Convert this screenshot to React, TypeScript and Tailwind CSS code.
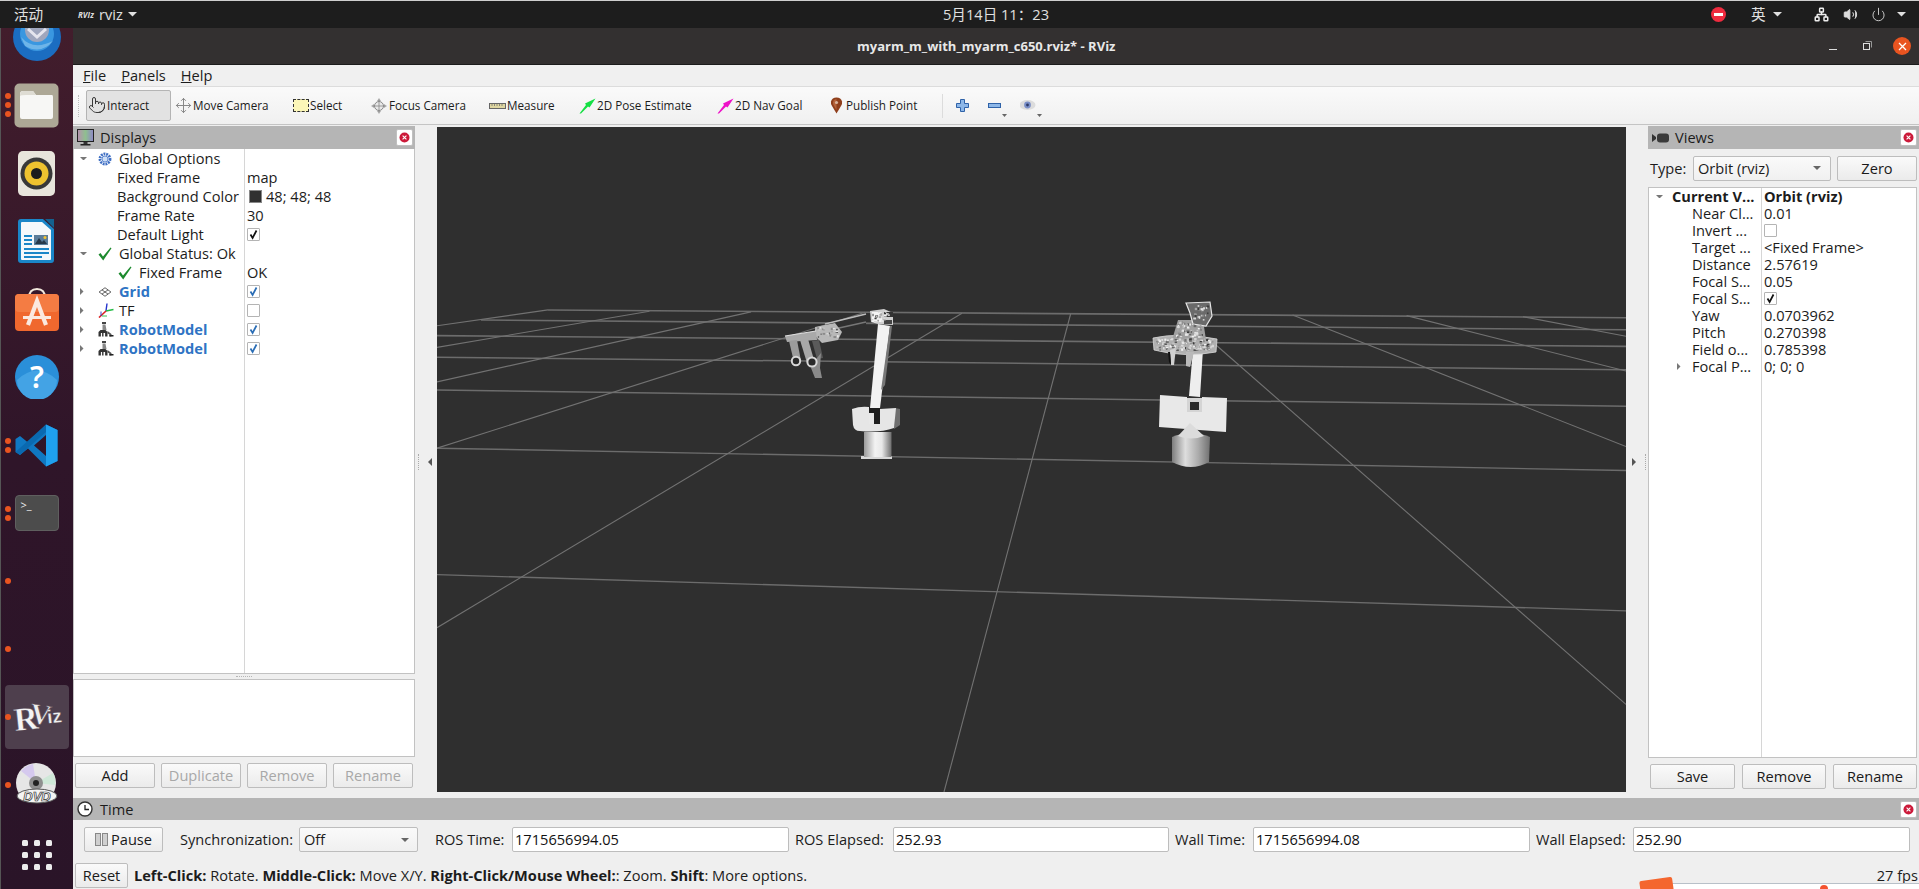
import React from "react";
import { Pointer, Move, Volume2, Power, Network } from "lucide-react";

const Tri = ({ dir = "down", c = "#666", s = 4 }: { dir?: "down" | "right" | "left"; c?: string; s?: number }) => {
  const pts =
    dir === "down" ? `0,0 ${s * 2},0 ${s},${s}` : dir === "right" ? `0,0 ${s},${s} 0,${s * 2}` : `${s},0 0,${s} ${s},${s * 2}`;
  const w = dir === "down" ? s * 2 : s;
  const h = dir === "down" ? s : s * 2;
  return (
    <svg width={w} height={h} viewBox={`0 0 ${w} ${h}`} className="shrink-0">
      <polygon points={pts} fill={c} />
    </svg>
  );
};

const Check = ({ on, blue }: { on?: boolean; blue?: boolean }) => (
  <div className="w-[13px] h-[13px] border border-[#b4b4b4] bg-white rounded-[1px] flex items-center justify-center">
    {on && (
      <svg width="11" height="11" viewBox="0 0 11 11">
        <path d="M2.5 5.5 L4.6 9 L8.5 1.5" fill="none" stroke={blue ? "#2a6db5" : "#111"} strokeWidth="1.7" />
      </svg>
    )}
  </div>
);

const GreenCheck = () => (
  <svg width="14" height="14" viewBox="0 0 14 14" className="shrink-0">
    <path d="M0.5 7.5 L2.5 6 L5 9.5 L12.5 0.5 L13.5 1.2 L5.2 13.5 Z" fill="#1d8a2e" />
  </svg>
);

const Gear = () => (
  <svg width="14" height="14" viewBox="0 0 15 15" className="shrink-0">
    <circle cx="7.5" cy="7.5" r="5.4" fill="none" stroke="#3f6fc4" strokeWidth="3" strokeDasharray="2 0.9" />
    <circle cx="7.5" cy="7.5" r="3.2" fill="#cfe0f7" stroke="#3f6fc4" strokeWidth="0.8" />
  </svg>
);

const GridIcon = () => (
  <svg width="14" height="10" viewBox="0 0 15 11" className="shrink-0">
    <path d="M7.5 0.8 L14 5.5 L7.5 10.2 L1 5.5 Z M4.2 3.2 L10.8 7.8 M10.8 3.2 L4.2 7.8" fill="none" stroke="#444" strokeWidth="0.9" />
  </svg>
);

const TFIcon = () => (
  <svg width="16" height="15" viewBox="0 0 16 15" className="shrink-0">
    <path d="M8 8 L9 0.5" stroke="#2233cc" strokeWidth="1.4" />
    <path d="M8 8 L15.5 6.5" stroke="#22bb44" strokeWidth="1.4" />
    <path d="M8 8 L1 14.5" stroke="#dd2222" strokeWidth="1.6" />
    <path d="M3 8.5 L3 13" stroke="#2233cc" strokeWidth="0.9" />
    <path d="M4 13 L9 13" stroke="#22bb44" strokeWidth="0.9" />
  </svg>
);

const RobotIcon = () => (
  <svg width="16" height="15" viewBox="0 0 16 15" className="shrink-0">
    <rect x="4" y="0" width="4" height="2" fill="#444" />
    <path d="M4.5 2.5 h3 l1 5.5 h-4 Z" fill="#888" />
    <path d="M0.5 14.5 v-4.5 l2-2 h5 l2 2 v4.5 h-2.4 v-3.5 h-1.6 v3.5 h-1.4 v-3.5 h-1.2 v3.5 Z" fill="#333" />
    <path d="M9.5 9 l4 3 v2.5 h-2.2 v-2 l-1.8-1 Z" fill="#555" />
    <rect x="11.5" y="13" width="4" height="1.5" fill="#222" />
  </svg>
);

const CloseBtn = () => (
  <div className="w-[17px] h-[17px] bg-white border border-[#c0c0c0] rounded-[2px] flex items-center justify-center">
    <svg width="11" height="11" viewBox="0 0 11 11">
      <circle cx="5.5" cy="5.5" r="5" fill="#cc1a3a" />
      <path d="M3.6 3.6 L7.4 7.4 M7.4 3.6 L3.6 7.4" stroke="#fff" strokeWidth="1.1" />
    </svg>
  </div>
);

const Btn = ({ children, w, disabled }: { children: React.ReactNode; w: string; disabled?: boolean }) => (
  <div
    className={`${w} h-[25px] shrink-0 flex items-center justify-center rounded-[2px] border border-[#bdbdbd] bg-gradient-to-b from-[#fafafa] to-[#ebebeb] ${disabled ? "text-[#a8a8a8]" : "text-[#1a1a1a]"}`}
  >
    {children}
  </div>
);

const TreeRow = ({
  arrow,
  icon,
  label,
  value,
  labelClass = "",
  indent = 0,
}: {
  arrow?: "down" | "right";
  icon?: React.ReactNode;
  label: string;
  value?: React.ReactNode;
  labelClass?: string;
  indent?: number;
}) => (
  <div className="h-[19px] flex items-center">
    <div className="w-[171px] h-full shrink-0 flex items-center border-r border-[#d6d6d6]">
      <div className="w-[24px] pl-[6px] shrink-0 flex items-center">
        {arrow && <Tri dir={arrow} c="#777" s={3.5} />}
      </div>
      {icon ? (
        <>
          <div className="w-[20px] shrink-0 flex items-center justify-start" style={{ marginLeft: indent }}>
            {icon}
          </div>
          <span className={`ml-[1px] whitespace-nowrap ${labelClass}`}>{label}</span>
        </>
      ) : (
        <span className={`ml-[19px] whitespace-nowrap ${labelClass}`}>{label}</span>
      )}
    </div>
    <div className="pl-[2px] flex items-center gap-[4px] whitespace-nowrap">{value}</div>
  </div>
);

const ViewRow = ({
  label,
  value,
  bold,
  arrow,
}: {
  label: string;
  value: React.ReactNode;
  bold?: boolean;
  arrow?: "down" | "right";
}) => (
  <div className="h-[17px] flex items-center">
    <div className="w-[113px] h-full shrink-0 flex items-center border-r border-[#d6d6d6]">
      {bold ? (
        <>
          <div className="w-[23px] pl-[7px] shrink-0 flex">
            <Tri dir="down" c="#777" s={3.5} />
          </div>
          <span className="font-bold whitespace-nowrap">{label}</span>
        </>
      ) : (
        <>
          <div className="w-[43px] pl-[28px] shrink-0 flex">{arrow && <Tri dir="right" c="#777" s={3.5} />}</div>
          <span className="whitespace-nowrap">{label}</span>
        </>
      )}
    </div>
    <div className={`pl-[2px] whitespace-nowrap ${bold ? "font-bold" : ""}`}>{value}</div>
  </div>
);

const ToolBtn = ({ w, icon, label, active }: { w: string; icon: React.ReactNode; label: string; active?: boolean }) => (
  <div
    className={`${w} h-[31px] shrink-0 flex items-center rounded-[2px] ${active ? "bg-[#e2e2e2] border border-[#b4b4b4]" : ""}`}
  >
    {icon}
    <span className="ml-[1px] whitespace-nowrap">{label}</span>
  </div>
);

const Field = ({ w, value }: { w: string; value: string }) => (
  <div className={`${w} h-[25px] shrink-0 bg-white border border-[#bdbdbd] rounded-[2px] flex items-center pl-[2px] text-[#111]`}>
    {value}
  </div>
);

const Dots = ({ n }: { n: number }) => (
  <div className="absolute left-[5px] top-0 bottom-0 flex flex-col justify-center gap-[3px]">
    {Array.from({ length: n }).map((_, i) => (
      <div key={i} className="w-[6px] h-[6px] rounded-full bg-[#e95420]" />
    ))}
  </div>
);

const Slot = ({ dots = 0, children, active }: { dots?: number; children?: React.ReactNode; active?: boolean }) => (
  <div className="relative h-[68px] w-[73px] shrink-0 flex items-center justify-center">
    {active && <div className="absolute left-[5px] top-[2px] w-[64px] h-[64px] rounded-[4px] bg-[#4e3f4d]" />}
    <div className="relative flex items-center justify-center">{children}</div>
    {dots > 0 && <Dots n={dots} />}
  </div>
);

const Dock = () => (
  <div className="w-[73px] shrink-0 h-full overflow-hidden flex flex-col bg-gradient-to-b from-[#421d2c] via-[#2f1529] to-[#2a1428] border-l border-[#555]">
    <div className="-mt-[25px] flex flex-col -ml-[1px]">
      <Slot>
        <svg width="48" height="48" viewBox="0 0 48 48">
          <circle cx="24" cy="24" r="24" fill="#1b6dc1" />
          <circle cx="24" cy="21" r="17" fill="#3a97e0" />
          <circle cx="24" cy="17" r="12" fill="#9fa6bd" />
          <path d="M15 16 L24 24 L33 16" fill="none" stroke="#e5e5ee" strokeWidth="3" />
          <path d="M8 24 Q20 38 40 28 Q28 42 12 33 Z" fill="#bfe3f8" opacity="0.4" />
        </svg>
      </Slot>
      <Slot dots={3}>
        <svg width="45" height="45" viewBox="0 0 45 45">
          <rect x="0.5" y="0.5" width="44" height="44" rx="5" fill="#ada896" />
          <path d="M6 11 Q6 8 9 8 H19 L22 12 H38 Q39 12 39 14 V34 Q39 36 37 36 H8 Q6 36 6 34 Z" fill="#f7f7f5" />
          <path d="M6 13 Q6 8 9 8 H19 L22 12 H12 Q7 12 6 13 Z" fill="#dedcd3" />
        </svg>
      </Slot>
      <Slot>
        <svg width="37" height="45" viewBox="0 0 37 45">
          <rect x="0" y="0" width="37" height="45" rx="5" fill="#e8e5dc" />
          <circle cx="18.5" cy="22.5" r="16" fill="#383838" />
          <circle cx="18.5" cy="22.5" r="12" fill="#eec22f" />
          <circle cx="18.5" cy="22.5" r="5.5" fill="#1d1d1d" />
        </svg>
      </Slot>
      <Slot>
        <svg width="38" height="45" viewBox="0 0 38 45">
          <path d="M3 0 H25 L36 10 V41 Q36 44 33 44 H3 Q0 44 0 41 V3 Q0 0 3 0 Z" fill="#1a86c8" />
          <path d="M4 3 H24 L33 11 V40 Q33 41 32 41 H4 Q3 41 3 40 V4 Q3 3 4 3 Z" fill="#f4f8fb" />
          <path d="M27 0 H36 V9 Z" fill="#14618f" />
          <rect x="6" y="16" width="8" height="2" fill="#1a86c8" />
          <rect x="6" y="20" width="8" height="2" fill="#1a86c8" />
          <rect x="6" y="24" width="8" height="2" fill="#1a86c8" />
          <rect x="16" y="16" width="14" height="10" fill="#5a7d9a" />
          <path d="M17 25 L21 19 L24 23 L26 21 L29 25 Z" fill="#26394a" />
          <circle cx="27" cy="18.5" r="1.5" fill="#f4c430" />
          <rect x="6" y="29" width="25" height="2" fill="#1a86c8" />
          <rect x="6" y="33" width="25" height="2" fill="#1a86c8" />
          <rect x="6" y="37" width="18" height="2" fill="#1a86c8" />
        </svg>
      </Slot>
      <Slot>
        <svg width="44" height="43" viewBox="0 0 44 43">
          <path d="M14 10 Q14 1 22 1 Q30 1 30 10" fill="none" stroke="#f0e8dc" strokeWidth="2" />
          <rect x="0" y="6" width="44" height="37" rx="4" fill="#f0682e" />
          <rect x="0" y="6" width="44" height="18" rx="4" fill="#f47c43" />
          <path d="M13 37 L22 13 L31 37" fill="none" stroke="#fbe9df" strokeWidth="4.2" />
          <rect x="8" y="28" width="28" height="3" fill="#fbe9df" />
        </svg>
      </Slot>
      <Slot>
        <svg width="44" height="44" viewBox="0 0 44 44">
          <circle cx="22" cy="22" r="22" fill="#2a8fd9" />
          <path d="M2 25 Q22 6 42 25 A20 20 0 0 1 2 25" fill="#43a3e5" />
          <text x="22" y="33" textAnchor="middle" fontSize="30" fontWeight="600" fill="#fff" fontFamily="Noto Sans, sans-serif">?</text>
        </svg>
      </Slot>
      <Slot dots={2}>
        <svg width="43" height="43" viewBox="0 0 43 43">
          <path d="M31 0.5 L42.5 6 V37 L31 42.5 L13 24.5 L5 31 L0.5 28 V15 L5 12 L13 18.5 Z M31 11 L19 21.5 L31 32 Z" fill="#1078c2" />
          <path d="M31 0.5 L42.5 6 V37 L31 42.5 Z" fill="#1fa0ee" />
          <path d="M0.5 28 L31 0.5 L31 8 L5 31 Z" fill="#0a69b0" />
        </svg>
      </Slot>
      <Slot dots={2}>
        <div className="w-[44px] h-[36px] rounded-[4px] bg-[#4c4c4c] border border-[#5f5f5f] flex items-start pl-[5px] pt-[2px] text-[#eee] text-[11px] leading-[14px]">
          &gt;_
        </div>
      </Slot>
      <Slot dots={1} />
      <Slot dots={1} />
      <Slot dots={1} active>
        <svg width="60" height="60" viewBox="-7 -12 60 60">
          <text x="0" y="31" fontSize="33" fontWeight="700" fill="#f4f4f4" stroke="#4e3f4d" strokeWidth="0.4" fontFamily="Liberation Serif, serif" transform="rotate(-6 10 20)">R</text>
          <text x="16" y="25" fontSize="29" fontWeight="700" fill="#eeeeee" stroke="#4e3f4d" strokeWidth="0.6" fontFamily="Liberation Serif, serif" transform="rotate(8 26 18)">V</text>
          <text x="33" y="24" fontSize="19" fontWeight="700" fill="#f0f0f0" stroke="#4e3f4d" strokeWidth="0.3" fontFamily="Liberation Sans, sans-serif" transform="rotate(-6 38 18)">iz</text>
        </svg>
      </Slot>
      <Slot dots={1}>
        <svg width="44" height="44" viewBox="0 0 44 44">
          <circle cx="21" cy="20" r="20" fill="#e6e6e6" />
          <path d="M21 20 L6 8 A20 20 0 0 1 18 1 Z" fill="#d5c9ee" />
          <path d="M21 20 L38 10 A20 20 0 0 1 40 22 Z" fill="#cfe8d8" />
          <circle cx="21" cy="20" r="7" fill="#8f8f8f" />
          <circle cx="21" cy="20" r="3" fill="#222" />
          <ellipse cx="22" cy="33" rx="20" ry="7" fill="#f4f4f4" stroke="#555" strokeWidth="1" />
          <text x="22" y="37.5" textAnchor="middle" fontSize="13" fontWeight="700" fontStyle="italic" fill="#f8f8f8" stroke="#333" strokeWidth="0.7" fontFamily="Liberation Sans, sans-serif">DVD</text>
        </svg>
      </Slot>
      <div className="mt-[2px] grid grid-cols-3 gap-[6px] w-[30px] ml-[22px] pt-[19px]">
        {Array.from({ length: 9 }).map((_, i) => (
          <div key={i} className="w-[6px] h-[6px] rounded-[1.5px] bg-[#ececec]" />
        ))}
      </div>
    </div>
  </div>
);

const TopBar = () => (
  <div className="h-[28px] shrink-0 bg-[#1d1d1d] border-t border-[#cfcfcf] flex items-center text-[#e0e0e0] text-[14.6px]">
    <span className="ml-[14px] w-[28px] whitespace-nowrap">活动</span>
    <span className="ml-[36px] w-[15px] text-[8px] font-bold italic text-[#ddd] whitespace-nowrap">RVIz</span>
    <span className="ml-[6px] w-[26px]">rviz</span>
    <div className="ml-[3px]">
      <Tri c="#e0e0e0" s={4.5} />
    </div>
    <div className="w-[806px] shrink-0" />
    <span className="w-[108px] whitespace-nowrap">5月14日 11：23</span>
    <div className="w-[660px] shrink-0" />
    <svg width="15" height="15" viewBox="0 0 15 15" className="shrink-0">
      <circle cx="7.5" cy="7.5" r="7.5" fill="#ef2b3f" />
      <rect x="3" y="6" width="9" height="3" fill="#fff" />
    </svg>
    <span className="ml-[25px] w-[15px]">英</span>
    <div className="ml-[7px]">
      <Tri c="#e0e0e0" s={4.5} />
    </div>
    <div className="ml-[32px]">
      <Network size={15} color="#eee" strokeWidth={2.4} />
    </div>
    <div className="ml-[14px]">
      <Volume2 size={15} color="#ddd" fill="#ddd" strokeWidth={1.6} />
    </div>
    <div className="ml-[13px]">
      <Power size={15} color="#ddd" strokeWidth={1.4} />
    </div>
    <div className="ml-[11px]">
      <Tri c="#e0e0e0" s={4.5} />
    </div>
  </div>
);

const TitleBar = () => (
  <div className="h-[37px] shrink-0 bg-[#333030] border-b border-[#1c1c1c] flex items-center">
    <div className="w-[784px] shrink-0" />
    <span className="w-[205px] whitespace-nowrap text-[13px] font-bold text-[#e8e8e8]">myarm_m_with_myarm_c650.rviz* - RViz</span>
    <div className="w-[767px] shrink-0" />
    <div className="w-[8px] h-[1px] bg-[#ddd] mt-[6px]" />
    <svg width="9" height="9" viewBox="0 0 9 9" className="ml-[26px] shrink-0 -mt-[1px]">
      <rect x="0.5" y="2.5" width="6" height="6" fill="none" stroke="#ddd" />
      <path d="M2.5 0.5 H8.5 V6.5" fill="none" stroke="#999" />
    </svg>
    <div className="ml-[21px] w-[18px] h-[18px] rounded-full bg-[#e95420] flex items-center justify-center">
      <svg width="9" height="9" viewBox="0 0 9 9">
        <path d="M1 1 L8 8 M8 1 L1 8" stroke="#fff" strokeWidth="1.3" />
      </svg>
    </div>
  </div>
);

const MenuBar = () => (
  <div className="h-[22px] shrink-0 bg-[#f0f0f0] border-b border-[#dcdcdc] flex items-center text-[14.6px] text-[#1c1c1c] pl-[10px] gap-[15px]">
    <span><span className="underline">F</span>ile</span>
    <span><span className="underline">P</span>anels</span>
    <span><span className="underline">H</span>elp</span>
  </div>
);

const ToolBar = () => (
  <div className="h-[38px] shrink-0 bg-gradient-to-b from-[#fafafa] to-[#f0f0f0] border-b border-[#c4c4c4] flex items-center text-[11.7px] text-[#1c1c1c]">
    <div className="ml-[5px] w-[4px] h-[22px] border-l border-dotted border-[#bbb]" />
    <div className="ml-[4px]">
      <ToolBtn
        w="w-[85px]"
        active
        icon={
          <div className="ml-[1px] -mt-[2px]">
            <Pointer size={18} color="#333" strokeWidth={1.3} />
          </div>
        }
        label="Interact"
      />
    </div>
    <div className="ml-[4px]">
      <ToolBtn
        w="w-[118px]"
        icon={<Move size={17} color="#888" strokeWidth={1.4} />}
        label="Move Camera"
      />
    </div>
    <ToolBtn
      w="w-[77px]"
      icon={<div className="w-[16px] h-[13px] bg-[#fbf6b8] border border-dashed border-[#333]" />}
      label="Select"
    />
    <ToolBtn
      w="w-[119px]"
      icon={
        <svg width="18" height="18" viewBox="0 0 18 18">
          <path d="M9 1 L11 4 H7 Z M9 17 L7 14 H11 Z M1 9 L4 7 V11 Z M17 9 L14 11 V7 Z" fill="#aaa" />
          <circle cx="9" cy="9" r="4.5" fill="#e8e8e8" stroke="#888" />
          <path d="M9 3 V15 M3 9 H15" stroke="#888" strokeWidth="0.8" />
        </svg>
      }
      label="Focus Camera"
    />
    <ToolBtn
      w="w-[90px]"
      icon={
        <svg width="17" height="6" viewBox="0 0 17 6">
          <rect x="0.5" y="0.5" width="16" height="5" fill="#dfd7a2" stroke="#666" />
          <path d="M3 1 V3 M5.5 1 V3 M8 1 V3 M10.5 1 V3 M13 1 V3" stroke="#666" strokeWidth="0.7" />
        </svg>
      }
      label="Measure"
    />
    <ToolBtn
      w="w-[138px]"
      icon={
        <svg width="17" height="16" viewBox="0 0 17 16">
          <path d="M0.5 15.5 L7 7 L6 5.5 L16.5 0.5 L10.5 9.5 L9 8.5 L2 15.5 Z" fill="#16e044" />
        </svg>
      }
      label="2D Pose Estimate"
    />
    <ToolBtn
      w="w-[112px]"
      icon={
        <svg width="17" height="16" viewBox="0 0 17 16">
          <path d="M0.5 15.5 L7 7 L6 5.5 L16.5 0.5 L10.5 9.5 L9 8.5 L2 15.5 Z" fill="#ee12c8" />
        </svg>
      }
      label="2D Nav Goal"
    />
    <ToolBtn
      w="w-[113px]"
      icon={
        <svg width="15" height="17" viewBox="0 0 15 17" className="mr-[1px]">
          <path d="M7.5 16.5 L3 9 Q1.5 6.5 2 4.5 Q3 0.5 7.5 0.5 Q12 0.5 13 4.5 Q13.5 6.5 12 9 Z" fill="#8f3f1c" />
          <path d="M7.5 13 L4.5 8 Q3.5 5.5 4.5 3.5 Q5.5 2 7.5 2 Z" fill="#b4623a" />
          <circle cx="7.5" cy="5.5" r="1.6" fill="#d8b39c" />
        </svg>
      }
      label="Publish Point"
    />
    <div className="w-[1px] h-[24px] bg-[#dcdcdc]" />
    <svg width="13" height="13" viewBox="0 0 13 13" className="ml-[13px] shrink-0">
      <path d="M4.5 0.5 H8.5 V4.5 H12.5 V8.5 H8.5 V12.5 H4.5 V8.5 H0.5 V4.5 H4.5 Z" fill="#8db7e8" stroke="#2f62a8" />
    </svg>
    <svg width="19" height="20" viewBox="0 0 19 20" className="ml-[19px] shrink-0 mt-[5px]">
      <rect x="0.5" y="5.5" width="12" height="4" fill="#8db7e8" stroke="#2f62a8" />
      <path d="M14 16 h5 l-2.5 3 Z" fill="#666" />
    </svg>
    <svg width="22" height="20" viewBox="0 0 22 20" className="ml-[13px] shrink-0 mt-[5px]">
      <ellipse cx="7.5" cy="7" rx="8" ry="5" fill="#dcdcdc" />
      <circle cx="7.5" cy="7" r="3.4" fill="#7a8fc8" />
      <circle cx="7.5" cy="7" r="1.4" fill="#2d3a66" />
      <path d="M17 16 h5 l-2.5 3 Z" fill="#666" />
    </svg>
  </div>
);

const PanelTitle = ({ icon, title }: { icon: React.ReactNode; title: string }) => (
  <div className="h-[23px] shrink-0 bg-[#b5b5b5] flex items-center pr-[2px]">
    <div className="w-[26px] pl-[4px] shrink-0 flex items-center">{icon}</div>
    <span className="ml-[1px]">{title}</span>
    <div className="ml-auto">
      <CloseBtn />
    </div>
  </div>
);

const Displays = () => (
  <div className="w-[342px] shrink-0 h-full flex flex-col">
    <PanelTitle
      title="Displays"
      icon={
        <svg width="17" height="17" viewBox="0 0 17 17">
          <defs>
            <linearGradient id="scr" x1="0" x2="1" y1="0" y2="0">
              <stop offset="0" stopColor="#b78fb0" />
              <stop offset="0.5" stopColor="#8fbf8f" />
              <stop offset="1" stopColor="#8f86c9" />
            </linearGradient>
          </defs>
          <rect x="0.5" y="0.5" width="16" height="12" fill="url(#scr)" stroke="#222" />
          <rect x="6.5" y="13" width="4" height="2" fill="#333" />
          <rect x="3.5" y="15" width="10" height="1.5" fill="#222" />
        </svg>
      }
    />
    <div className="h-[525px] shrink-0 bg-white border-x border-b border-[#c2c2c2] flex flex-col">
      <TreeRow arrow="down" icon={<Gear />} label="Global Options" />
      <TreeRow label="Fixed Frame" value="map" />
      <TreeRow
        label="Background Color"
        value={
          <>
            <div className="w-[13px] h-[13px] bg-[#303030] border border-[#888] ml-[2px]" />
            <span>48; 48; 48</span>
          </>
        }
      />
      <TreeRow label="Frame Rate" value="30" />
      <TreeRow label="Default Light" value={<Check on />} />
      <TreeRow arrow="down" icon={<GreenCheck />} label="Global Status: Ok" />
      <TreeRow icon={<GreenCheck />} indent={20} label="Fixed Frame" value="OK" />
      <TreeRow arrow="right" icon={<GridIcon />} label="Grid" labelClass="font-bold text-[#2f74c4]" value={<Check on blue />} />
      <TreeRow arrow="right" icon={<TFIcon />} label="TF" value={<Check />} />
      <TreeRow arrow="right" icon={<RobotIcon />} label="RobotModel" labelClass="font-bold text-[#2f74c4]" value={<Check on blue />} />
      <TreeRow arrow="right" icon={<RobotIcon />} label="RobotModel" labelClass="font-bold text-[#2f74c4]" value={<Check on blue />} />
      <div className="flex-1 flex">
        <div className="w-[171px] border-r border-[#d6d6d6]" />
      </div>
    </div>
    <div className="h-[5px] shrink-0 flex items-center justify-center">
      <div className="w-[16px] border-t border-dotted border-[#b5b5b5]" />
    </div>
    <div className="h-[78px] shrink-0 bg-white border border-[#c2c2c2]" />
    <div className="mt-[6px] pl-[2px] flex gap-[6px]">
      <Btn w="w-[80px]">Add</Btn>
      <Btn w="w-[80px]" disabled>Duplicate</Btn>
      <Btn w="w-[80px]" disabled>Remove</Btn>
      <Btn w="w-[80px]" disabled>Rename</Btn>
    </div>
  </div>
);

const Views = () => (
  <div className="w-[271px] shrink-0 h-full flex flex-col">
    <PanelTitle
      title="Views"
      icon={
        <svg width="17" height="10" viewBox="0 0 17 10">
          <path d="M0 1 L4 4 V6 L0 9 Z" fill="#333" />
          <rect x="5" y="0.5" width="12" height="9" rx="3" fill="#3a3a3a" />
        </svg>
      }
    />
    <div className="h-[38px] shrink-0 flex items-center">
      <span className="ml-[2px] w-[43px]">Type:</span>
      <div className="w-[138px] h-[25px] shrink-0 border border-[#bdbdbd] rounded-[2px] bg-gradient-to-b from-[#fafafa] to-[#f0f0f0] flex items-center pl-[4px] pr-[9px]">
        <span>Orbit (rviz)</span>
        <div className="ml-auto">
          <Tri c="#666" s={4} />
        </div>
      </div>
      <div className="ml-[6px]">
        <Btn w="w-[80px]">Zero</Btn>
      </div>
    </div>
    <div className="h-[571px] shrink-0 w-[269px] bg-white border border-[#c2c2c2] flex flex-col">
      <ViewRow bold label="Current V..." value="Orbit (rviz)" />
      <ViewRow label="Near Cl..." value="0.01" />
      <ViewRow label="Invert ..." value={<Check />} />
      <ViewRow label="Target ..." value="<Fixed Frame>" />
      <ViewRow label="Distance" value="2.57619" />
      <ViewRow label="Focal S..." value="0.05" />
      <ViewRow label="Focal S..." value={<Check on />} />
      <ViewRow label="Yaw" value="0.0703962" />
      <ViewRow label="Pitch" value="0.270398" />
      <ViewRow label="Field o..." value="0.785398" />
      <ViewRow arrow="right" label="Focal P..." value="0; 0; 0" />
      <div className="flex-1 flex">
        <div className="w-[113px] border-r border-[#d6d6d6]" />
      </div>
    </div>
    <div className="mt-[6px] pl-[2px] flex gap-[7px]">
      <Btn w="w-[85px]">Save</Btn>
      <Btn w="w-[84px]">Remove</Btn>
      <Btn w="w-[84px]">Rename</Btn>
    </div>
  </div>
);

const hLines: [number, number, number, number, number][] = [
  [548, 310, 1626, 317.7, 1.6],
  [481, 320, 1626, 329.8, 1.6],
  [437, 335.6, 1626, 346.4, 1.6],
  [437, 357.2, 1626, 369.7, 1.5],
  [437, 390, 1626, 406.2, 1.5],
  [437, 448.2, 1626, 470.5, 1.4],
  [437, 574.6, 1626, 610.8, 1.3],
];
const dLines: [number, number, number, number][] = [
  [437, 325.8, 548, 309.9],
  [437, 347.4, 649.5, 311.2],
  [437, 381.9, 751, 311.9],
  [437, 448.2, 865, 312.3],
  [437, 627.7, 962, 313.3],
  [944, 792, 1070.6, 314],
  [1216, 345, 1626, 704.4],
  [1292.6, 315, 1626, 446.5],
  [1406.6, 315.6, 1626, 371],
  [1523, 316.7, 1626, 336.3],
];

const speckle = (x0: number, y0: number, w: number, h: number, n: number, seed: number) => {
  const cols = ["#f0f0f0", "#d8d8d8", "#6a6a6a", "#c4c4c4", "#8a8a8a", "#e6e6e6", "#a8a8a8", "#3c3c3c"];
  const out: { x: number; y: number; w: number; h: number; c: string }[] = [];
  let s = seed;
  const next = () => {
    s = (s * 1103515245 + 12345) % 2147483648;
    return s / 2147483648;
  };
  for (let i = 0; i < n; i++) {
    const sw = 1 + next() * 2;
    const sh = 1 + next() * 1.5;
    out.push({
      x: x0 + next() * (w - sw),
      y: y0 + next() * (h - sh),
      w: sw,
      h: sh,
      c: cols[Math.floor(next() * cols.length)],
    });
  }
  return out;
};

const headSpecks = [
  ...speckle(1156, 338, 58, 13, 170, 7),
  ...speckle(1176, 321, 27, 17, 70, 23),
  ...speckle(1192, 305, 17, 16, 26, 51),
];
const gripSpecks = [...speckle(817, 327, 22, 12, 30, 11), ...speckle(872, 311, 20, 12, 22, 31)];

const Scene = () => (
  <svg className="w-full h-full block" viewBox="437 127 1189 665">
    <defs>
      <linearGradient id="cylL" x1="0" x2="1" y1="0" y2="0">
        <stop offset="0" stopColor="#9a9a9a" />
        <stop offset="0.4" stopColor="#f2f2f2" />
        <stop offset="0.65" stopColor="#e8e8e8" />
        <stop offset="1" stopColor="#6e6e6e" />
      </linearGradient>
      <linearGradient id="cylR" x1="0" x2="1" y1="0" y2="0">
        <stop offset="0" stopColor="#7d7d7d" />
        <stop offset="0.35" stopColor="#dedede" />
        <stop offset="0.7" stopColor="#aaaaaa" />
        <stop offset="1" stopColor="#707070" />
      </linearGradient>
    </defs>
    <rect x="437" y="127" width="1189" height="665" fill="#2f2f2f" />
    {hLines.map(([a, b, c, d, w], i) => (
      <line key={i} x1={a} y1={b} x2={c} y2={d} stroke="#6c6c6c" strokeWidth={w} />
    ))}
    {dLines.map(([a, b, c, d], i) => (
      <line key={i} x1={a} y1={b} x2={c} y2={d} stroke="#727272" strokeWidth="1.1" />
    ))}

    {/* left robot */}
    <rect x="861" y="456" width="31" height="3" fill="#d8d8d8" />
    <rect x="864" y="432" width="27.5" height="25" fill="url(#cylL)" />
    <path d="M895 408 L900 409 V425 L894 429 Z" fill="#6f6f6f" />
    <path d="M852 409 Q860 406 869 407 V423 H880 V409 L896 408 L894 428 Q880 433 860 431 Q854 431 853 425 Z" fill="#e6e6e6" />
    <rect x="869" y="407" width="11" height="17" fill="#1f1f1f" />
    <rect x="869" y="413" width="5" height="11" fill="#e8e8e8" />
    <path d="M870 408 L880 408 L890 326 L878 324 Z" fill="#f2f2f2" />
    <path d="M890 326 L892 326 L885 385 L881 390 Z" fill="#777" />
    <path d="M870 311 L884 309 L893 313 L893 325 L878 324 L871 322 Z" fill="#cfcfcf" />
    <rect x="872" y="312" width="10" height="10" fill="#f4f4f4" />
    <rect x="884" y="312" width="9" height="5" fill="#333" />
    <rect x="884" y="320" width="8" height="4" fill="#444" />
    <path d="M825 324 L866 314 L866 325 L830 334 Z" fill="#2f2f2f" />
    <path d="M825 324 L866 314" stroke="#bdbdbd" strokeWidth="1.5" />
    <path d="M830 330 L866 322" stroke="#777" strokeWidth="1.5" />
    <path d="M815 327 L835 323 L842 332 L838 340 L822 343 L815 336 Z" fill="#b8b8b8" />
    <path d="M785 336 L816 331 L817 340 L787 342 Z" fill="#a9a9a9" />
    <path d="M785 336 L816 331" stroke="#dedede" strokeWidth="1.2" />
    <path d="M789 341 L797 340 L801 361 L794 362 Z" fill="#9c9c9c" />
    <path d="M800 340 L808 339 L814 360 L807 363 Z" fill="#a8a8a8" />
    <path d="M812 341 L819 340 L823 358 L817 359 Z" fill="#5a5a5a" />
    <path d="M817 358 L821 353 L820 368 L822 378 L815 378 L811 368 Z" fill="#8a8a8a" />
    <circle cx="796" cy="361" r="4.2" fill="#2a2a2a" stroke="#d8d8d8" strokeWidth="2" />
    <circle cx="812" cy="362" r="4.6" fill="#2a2a2a" stroke="#d8d8d8" strokeWidth="2" />
    {gripSpecks.map((p, i) => (
      <rect key={i} x={p.x} y={p.y} width={p.w} height={p.h} fill={p.c} />
    ))}

    {/* right robot */}
    <path d="M1172 437 Q1191 429 1210 437 L1209 462 Q1191 472 1172 462 Z" fill="url(#cylR)" />
    <path d="M1160 395 L1187 397 V412 H1202 V397 L1227 398 L1226 432 L1159 427 Z" fill="#e8e8e8" />
    <path d="M1178 436 L1190 423 L1204 436 Q1191 441 1178 436 Z" fill="#dcdcdc" />
    <rect x="1187" y="398" width="15" height="14" fill="#d4d4d4" />
    <rect x="1190" y="402" width="9" height="8" fill="#2a2a2a" />
    <path d="M1189 396 L1200 397 L1203 349 L1193 349 Z" fill="#eeeeee" />
    <path d="M1153 338 Q1180 332 1217 339 L1216 352 Q1185 358 1154 350 Z" fill="#b0b0b0" stroke="#d8d8d8" strokeWidth="0.8" />
    <path d="M1172 340 L1178 320 L1203 320 L1206 340 Z" fill="#a0a0a0" />
    <path d="M1186 303 L1210 302 L1212 316 L1206 326 L1193 324 L1190 313 Z" fill="#6a6a6a" stroke="#e6e6e6" strokeWidth="1.2" />
    {headSpecks.map((p, i) => (
      <rect key={i} x={p.x} y={p.y} width={p.w} height={p.h} fill={p.c} />
    ))}
    <path d="M1170 350 L1176 348 L1174 365 L1171 365 Z" fill="#d0d0d0" />
    <path d="M1168 352 L1170 352 L1171 365 L1169 362 Z" fill="#111" />
    <path d="M1186 352 L1194 352 L1190 367 L1186 366 Z" fill="#b9b9b9" />
  </svg>
);

const TimePanel = () => (
  <div className="h-[91px] shrink-0 flex flex-col">
    <div className="h-[22px] shrink-0 bg-[#b5b5b5] flex items-center pr-[2px]">
      <div className="w-[25px] pl-[4px] shrink-0">
        <svg width="16" height="16" viewBox="0 0 16 16">
          <circle cx="8" cy="8" r="7" fill="#fff" stroke="#333" strokeWidth="1.4" />
          <path d="M8 4 V8.5 H12" fill="none" stroke="#222" strokeWidth="1.3" />
        </svg>
      </div>
      <span className="ml-[2px] pt-[1px]">Time</span>
      <div className="ml-auto">
        <CloseBtn />
      </div>
    </div>
    <div className="mt-[7px] h-[25px] shrink-0 flex items-center pl-[11px]">
      <Btn w="w-[79px]">
        <div className="flex gap-[1px] mr-[3px]">
          <div className="w-[6px] h-[13px] bg-[#cfcfcf] border border-[#888]" />
          <div className="w-[6px] h-[13px] bg-[#cfcfcf] border border-[#888]" />
        </div>
        Pause
      </Btn>
      <span className="ml-[17px] w-[119px] whitespace-nowrap">Synchronization:</span>
      <div className="w-[119px] h-[25px] shrink-0 border border-[#bdbdbd] rounded-[2px] bg-gradient-to-b from-[#fafafa] to-[#f0f0f0] flex items-center pl-[4px] pr-[8px]">
        <span>Off</span>
        <div className="ml-auto">
          <Tri c="#666" s={4} />
        </div>
      </div>
      <span className="ml-[17px] w-[77px] whitespace-nowrap">ROS Time:</span>
      <Field w="w-[277px]" value="1715656994.05" />
      <span className="ml-[6px] w-[98px] whitespace-nowrap">ROS Elapsed:</span>
      <Field w="w-[276px]" value="252.93" />
      <span className="ml-[6px] w-[78px] whitespace-nowrap">Wall Time:</span>
      <Field w="w-[277px]" value="1715656994.08" />
      <span className="ml-[6px] w-[97px] whitespace-nowrap">Wall Elapsed:</span>
      <Field w="w-[277px]" value="252.90" />
    </div>
    <div className="mt-[11px] h-[25px] shrink-0 flex items-center pl-[2px]">
      <Btn w="w-[53px]">Reset</Btn>
      <span className="ml-[6px] whitespace-nowrap">
        <b>Left-Click:</b> Rotate. <b>Middle-Click:</b> Move X/Y. <b>Right-Click/Mouse Wheel:</b>: Zoom. <b>Shift</b>: More options.
      </span>
      <span className="ml-auto pr-[1px] whitespace-nowrap">27 fps</span>
    </div>
  </div>
);

export default function App() {
  return (
    <div className="relative w-[1919px] h-[889px] overflow-hidden flex flex-col bg-[#efefef] text-[14.6px] leading-none text-[#1c1c1c] font-['Open_Sans','Noto_Sans_CJK_SC',sans-serif]">
      <TopBar />
      <div className="flex flex-1 min-h-0">
        <Dock />
        <div className="flex-1 min-w-0 flex flex-col">
          <TitleBar />
          <MenuBar />
          <ToolBar />
          <div className="h-[673px] shrink-0 flex pt-[1px]">
            <Displays />
            <div className="w-[22px] shrink-0 flex items-center pl-[3px]">
              <div className="h-[16px] border-l border-dotted border-[#aaa]" />
              <div className="ml-[9px]">
                <Tri dir="left" c="#555" s={4} />
              </div>
            </div>
            <div className="w-[1189px] h-[665px] shrink-0 mt-[1px]">
              <Scene />
            </div>
            <div className="w-[22px] shrink-0 flex items-center pl-[6px]">
              <Tri dir="right" c="#555" s={4} />
              <div className="ml-[9px] h-[16px] border-l border-dotted border-[#aaa]" />
            </div>
            <Views />
          </div>
          <TimePanel />
        </div>
      </div>
      {/* window peeking in from below the screen edge */}
      <div className="absolute left-[1672px] right-0 top-[883px] bottom-0 bg-white border-t border-[#b8c0c8]" />
      <div className="absolute left-[1640px] top-[879px] w-[33px] h-[14px] bg-[#f4662f] rounded-[2px] -rotate-[8deg]" />
      <div className="absolute left-[1820px] top-[885px] w-[8px] h-[8px] rounded-full bg-[#f4522f]" />
    </div>
  );
}
